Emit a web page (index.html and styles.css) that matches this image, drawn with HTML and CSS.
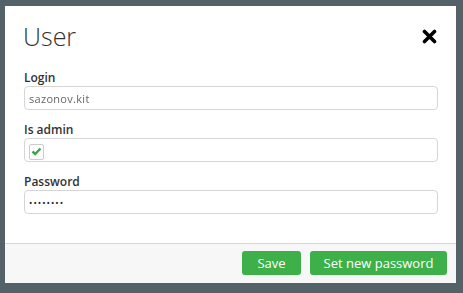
FILE: index.html
```html
<!DOCTYPE html>
<html>
<head>
<meta charset="utf-8">
<link rel="stylesheet" href="styles.css">
</head>
<body>
<div class="modal">
  <div class="header">
    <h1 class="title">User</h1>
    <button class="close" aria-label="Close">
      <svg width="15" height="15" viewBox="0 0 15 15"><path d="M2.5 2.5L12.5 12.5M12.5 2.5L2.5 12.5" stroke="#000" stroke-width="3.6" stroke-linecap="round"/></svg>
    </button>
  </div>
  <div class="body">
    <div class="field">
      <label class="label">Login</label>
      <div class="input"><span class="blur">sazonov.kit</span></div>
    </div>
    <div class="field">
      <label class="label">Is admin</label>
      <div class="input">
        <span class="checkbox"><svg width="11" height="9" viewBox="0 0 11 9"><path d="M1.5 4.5L4.2 7L9.5 1.5" stroke="#3aa845" stroke-width="2.4" fill="none"/></svg></span>
      </div>
    </div>
    <div class="field">
      <label class="label">Password</label>
      <div class="input"><span class="pass">••••••••</span></div>
    </div>
  </div>
  <div class="footer">
    <button class="btn btn-save">Save</button>
    <button class="btn btn-set">Set new password</button>
  </div>
</div>
</body>
</html>
```
FILE: styles.css
```css
html, body {
  margin: 0;
  padding: 0;
}
body {
  background: #536269;
  width: 463px;
  height: 293px;
  overflow: hidden;
  font-family: "Open Sans", "Liberation Sans", sans-serif;
  padding: 6px 0 0 5px;
  box-sizing: border-box;
}
.modal {
  width: 451px;
  height: 277px;
  background: #fff;
  display: flex;
  flex-direction: column;
}
.header {
  height: 62px;
  display: flex;
  align-items: center;
  justify-content: space-between;
  padding: 0 19px 2px 18px;
  box-sizing: border-box;
}
.title {
  margin: 0;
  font-weight: 300;
  font-size: 25px;
  line-height: 30px;
  color: #333;
}
.close {
  border: 0;
  background: none;
  padding: 0;
  width: 15px;
  height: 15px;
  display: flex;
}
.body {
  padding: 2px 18px 0 19px;
  flex: 1;
}
.field {
  display: flex;
  flex-direction: column;
  margin-bottom: 12px;
}
.label {
  font-size: 12px;
  font-weight: 600;
  line-height: 15px;
  color: #333;
  margin-bottom: 1px;
}
.input {
  height: 24px;
  border: 1px solid #d5d5d5;
  border-radius: 4px;
  box-sizing: border-box;
  display: flex;
  align-items: center;
  padding-left: 4px;
}
.blur {
  font-size: 11px;
  color: #666;
  filter: blur(0.4px);
  letter-spacing: 0.3px;
}
.pass {
  font-size: 9px;
  color: #222;
  letter-spacing: 1px;
}
.checkbox {
  width: 15px;
  height: 16px;
  border: 1px solid #ccc;
  border-radius: 2px;
  box-sizing: border-box;
  display: flex;
  align-items: center;
  justify-content: center;
  margin-top: 3px;
}
.footer {
  height: 40px;
  border-top: 1px solid #d6d6d6;
  background: #f7f7f7;
  box-sizing: border-box;
  display: flex;
  justify-content: flex-end;
  align-items: flex-start;
  padding: 7px 9px 0 0;
  gap: 9px;
}
.btn {
  height: 24px;
  border: 0;
  border-radius: 3px;
  background: #3db04a;
  color: #fff;
  font-family: "Open Sans", "Liberation Sans", sans-serif;
  font-size: 13px;
  padding: 0;
}
.btn-save {
  width: 59px;
}
.btn-set {
  width: 137px;
}
```
